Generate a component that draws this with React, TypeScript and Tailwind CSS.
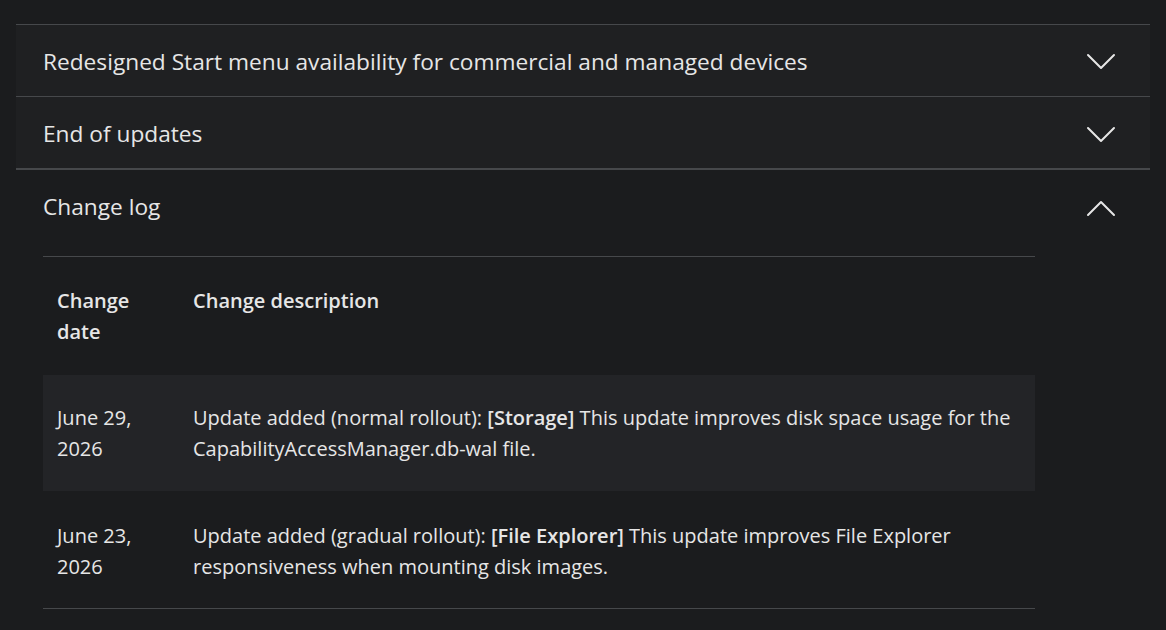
import { useState } from "react";

const font = { fontFamily: '"Open Sans", "Noto Sans", sans-serif' };

function Chevron({ up }: { up?: boolean }) {
  return (
    <svg width="30" height="18" viewBox="0 0 30 18" fill="none" className="shrink-0">
      <polyline
        points={up ? "2,16 15,3 28,16" : "2,2 15,15 28,2"}
        stroke="#e6e6e6"
        strokeWidth="2"
        strokeLinecap="round"
        strokeLinejoin="round"
      />
    </svg>
  );
}

const rows = [
  {
    date: "June 29, 2026",
    before: "Update added (normal rollout): ",
    tag: "[Storage]",
    after: " This update improves disk space usage for the CapabilityAccessManager.db-wal file.",
  },
  {
    date: "June 23, 2026",
    before: "Update added (gradual rollout): ",
    tag: "[File Explorer]",
    after: " This update improves File Explorer responsiveness when mounting disk images.",
  },
];

export default function App() {
  const [open, setOpen] = useState<number>(2);
  const items = [
    "Redesigned Start menu availability for commercial and managed devices",
    "End of updates",
  ];

  return (
    <div className="h-[630px] overflow-hidden bg-[#1b1c1e] pt-[24px] px-[16px] text-[#e6e6e6]" style={font}>
      {/* collapsed sections */}
      {items.map((title, i) => (
        <button
          key={title}
          onClick={() => setOpen(i)}
          className={
            "flex w-full items-center justify-between bg-[#1f2022] border-t border-[#46484b] pl-[27px] pr-[34px] text-left " +
            (i === items.length - 1 ? "border-b-2 h-[74px] pt-[4px]" : "h-[72px] pt-[3px]")
          }
        >
          <span className="text-[22.7px]">{title}</span>
          <Chevron />
        </button>
      ))}

      {/* Change log, expanded */}
      <div>
        <div className="flex items-center justify-between pl-[27px] pr-[34px] h-[75px]">
          <span className="text-[22.7px]">Change log</span>
          <Chevron up />
        </div>
        <div className="pl-[27px] pt-[11px]">
          <table className="w-[992px] border-collapse text-[20px] leading-[31px]">
            <thead>
              <tr className="border-t border-[#46484b]">
                <th className="w-[136px] px-[14px] pt-[28px] pb-[28px] text-left align-top font-semibold">Change date</th>
                <th className="px-[14px] pt-[28px] pb-[28px] text-left align-top font-semibold">Change description</th>
              </tr>
            </thead>
            <tbody>
              {rows.map((r, i) => {
                const pad = i % 2 === 0 ? "py-[27px]" : "pt-[29px] pb-[26px]";
                return (
                  <tr
                    key={r.date}
                    className={i % 2 === 0 ? "bg-[#232427]" : "border-b border-[#46484b]"}
                  >
                    <td className={"px-[14px] align-top " + pad}>{r.date}</td>
                    <td className={"px-[14px] align-top " + pad}>
                      {r.before}
                      <b className="font-semibold">{r.tag}</b>
                      {r.after}
                    </td>
                  </tr>
                );
              })}
            </tbody>
          </table>
        </div>
      </div>
    </div>
  );
}
